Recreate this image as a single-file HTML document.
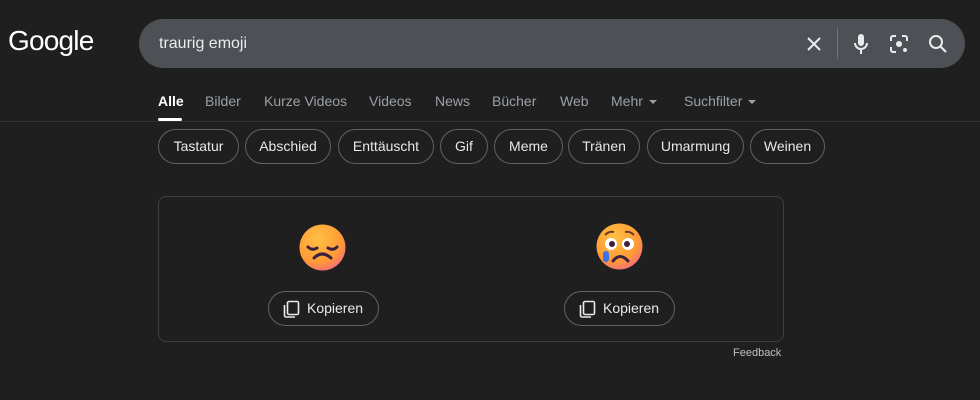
<!DOCTYPE html>
<html><head><meta charset="utf-8"><style>
*{margin:0;padding:0;box-sizing:border-box}
body{width:980px;height:400px;background:#1f1f1f;font-family:"Liberation Sans",Arial,sans-serif;position:relative;overflow:hidden;color:#e8e8e8}
.logo{position:absolute;left:8px;top:25px;font-size:28px;color:#fff;letter-spacing:-0.8px}
.search{position:absolute;left:139px;top:19px;width:826px;height:49px;border-radius:25px;background:#4d5156}
.search .q{position:absolute;left:20px;top:16px;font-size:16px;color:#e8eaed}
.tabs{position:absolute;top:93px;left:0;font-size:14px;color:#9aa0a6}
.tabs span{position:absolute;white-space:nowrap}
.tri{display:inline-block;width:0;height:0;border-left:4px solid transparent;border-right:4px solid transparent;border-top:4px solid #9aa0a6;vertical-align:middle;margin-left:6px}
.line{position:absolute;left:0;top:121px;width:980px;height:1px;background:#303134}
.chip{position:absolute;top:129px;height:35px;border:1px solid #5f6368;border-radius:18px;font-size:14px;color:#e8e8e8;text-align:center;line-height:33px}
.card{position:absolute;left:158px;top:196px;width:626px;height:146px;border:1px solid #3c4043;border-radius:8px}
.btn{position:absolute;top:291px;width:111px;height:35px;border:1px solid #5f6368;border-radius:18px;font-size:14px;line-height:33px;color:#e8eaed}
.btn svg{position:absolute;left:14px;top:8px}
.btn span{position:absolute;left:38px}
.fb{position:absolute;left:733px;top:347px;font-size:11px;color:#bdc1c6}
</style></head><body>
<div class="logo">Google</div>
<div class="search"><div class="q">traurig emoji</div>
<svg style="position:absolute;left:666px;top:16px" width="18" height="18" viewBox="0 0 18 18"><path d="M3 3L15 15M15 3L3 15" stroke="#e8eaed" stroke-width="2"/></svg>
<div style="position:absolute;left:698px;top:9px;width:1px;height:31px;background:#70757a"></div>
<svg style="position:absolute;left:712px;top:14px" width="20" height="22" viewBox="0 0 20 22"><rect x="7" y="1" width="6" height="12" rx="3" fill="#e8eaed"/><path d="M4 10a6 6 0 0 0 12 0M10 16v5" stroke="#e8eaed" stroke-width="2" fill="none"/></svg>
<svg style="position:absolute;left:749px;top:14px" width="22" height="22" viewBox="0 0 22 22"><path d="M3 8V5a2 2 0 0 1 2-2h3M14 3h3a2 2 0 0 1 2 2v3M3 14v3a2 2 0 0 0 2 2h3" stroke="#e8eaed" stroke-width="2" fill="none"/><circle cx="11" cy="11" r="3" fill="#e8eaed"/><circle cx="17" cy="17" r="2" fill="#e8eaed"/></svg>
<svg style="position:absolute;left:788px;top:14px" width="22" height="22" viewBox="0 0 22 22"><circle cx="9" cy="9" r="6" stroke="#e8eaed" stroke-width="2" fill="none"/><path d="M13.5 13.5L19 19" stroke="#e8eaed" stroke-width="2.2"/></svg>
</div>
<div class="tabs">
<span style="left:158px;color:#fff;font-weight:bold">Alle</span>
<span style="left:205px">Bilder</span>
<span style="left:264px">Kurze Videos</span>
<span style="left:369px">Videos</span>
<span style="left:435px">News</span>
<span style="left:492px">Bücher</span>
<span style="left:560px">Web</span>
<span style="left:611px">Mehr<i class="tri"></i></span>
<span style="left:684px">Suchfilter<i class="tri"></i></span>
</div>
<div style="position:absolute;left:158px;top:118px;width:24px;height:3px;background:#fff;border-radius:2px"></div>
<div class="line"></div>
<div class="chip" style="left:158px;width:81px">Tastatur</div>
<div class="chip" style="left:245px;width:86px">Abschied</div>
<div class="chip" style="left:338px;width:96px">Enttäuscht</div>
<div class="chip" style="left:440px;width:48px">Gif</div>
<div class="chip" style="left:494px;width:69px">Meme</div>
<div class="chip" style="left:568px;width:72px">Tränen</div>
<div class="chip" style="left:647px;width:97px">Umarmung</div>
<div class="chip" style="left:750px;width:75px">Weinen</div>
<div class="card"></div>
<svg style="position:absolute;left:299px;top:224px" width="47" height="47" viewBox="0 0 47 47"><defs><radialGradient id="g" cx="40%" cy="30%" r="75%"><stop offset="0" stop-color="#ffc043"/><stop offset=".7" stop-color="#ff9a36"/><stop offset="1" stop-color="#f36b7c"/></radialGradient></defs><circle cx="23.5" cy="23.5" r="23" fill="url(#g)"/><path d="M9 23q4 4 9 1M29 24q5 3 9-1M15 34q8-8 17 0" stroke="#3a2140" stroke-width="3" fill="none" stroke-linecap="round"/></svg>
<svg style="position:absolute;left:596px;top:223px" width="47" height="47" viewBox="0 0 47 47"><circle cx="23.5" cy="23.5" r="23" fill="url(#g)"/><path d="M9 12q4-4 9-3M29 9q5-1 9 3" stroke="#6b3b2a" stroke-width="2" fill="none"/><circle cx="15" cy="21" r="6" fill="#fff"/><circle cx="32" cy="21" r="6" fill="#fff"/><circle cx="16" cy="21" r="3" fill="#3a2140"/><circle cx="31" cy="21" r="3" fill="#3a2140"/><path d="M17 38q7-9 15 0" stroke="#3a2140" stroke-width="3" fill="none" stroke-linecap="round"/><rect x="7" y="28" width="6" height="11" rx="3" fill="#3b72e8"/></svg>
<div class="btn" style="left:268px"><svg width="18" height="18" viewBox="0 0 18 18"><path d="M6 1.5h8a1.5 1.5 0 0 1 1.5 1.5v10a1.5 1.5 0 0 1-1.5 1.5H6A1.5 1.5 0 0 1 4.5 13V3A1.5 1.5 0 0 1 6 1.5zM1.5 5v10.5a1.5 1.5 0 0 0 1.5 1.5h9" stroke="#e8eaed" stroke-width="1.6" fill="none"/></svg><span>Kopieren</span></div>
<div class="btn" style="left:564px"><svg width="18" height="18" viewBox="0 0 18 18"><path d="M6 1.5h8a1.5 1.5 0 0 1 1.5 1.5v10a1.5 1.5 0 0 1-1.5 1.5H6A1.5 1.5 0 0 1 4.5 13V3A1.5 1.5 0 0 1 6 1.5zM1.5 5v10.5a1.5 1.5 0 0 0 1.5 1.5h9" stroke="#e8eaed" stroke-width="1.6" fill="none"/></svg><span>Kopieren</span></div>
<div class="fb">Feedback</div>
</body></html>
